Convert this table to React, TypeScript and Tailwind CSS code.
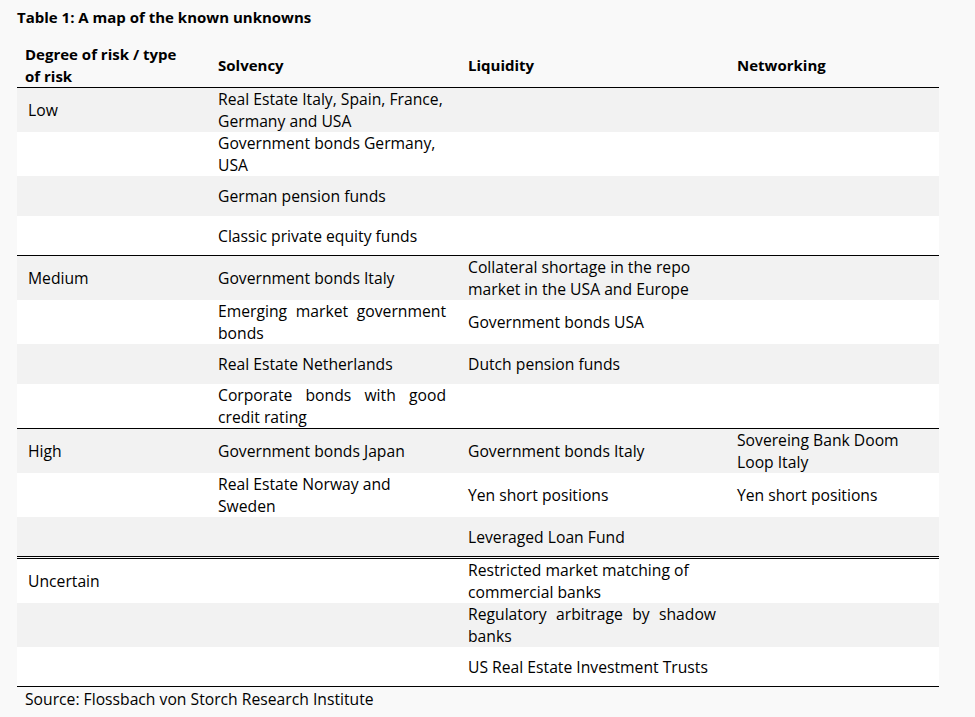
import React from "react";

type Cell = React.ReactNode;
type Row = { h: number; bg: "g" | "w"; c: [Cell, Cell, Cell, Cell] };

const J = ({ a, b, w }: { a: string; b: string; w?: boolean }) => (
  <div className={w ? "w-[248px]" : "w-[228px]"}>
    <div className="text-justify [text-align-last:justify]">{a}</div>
    <div>{b}</div>
  </div>
);
const T = ({ a, b }: { a: string; b?: string }) => (
  <div>
    <div className="whitespace-nowrap">{a}</div>
    {b && <div className="whitespace-nowrap">{b}</div>}
  </div>
);

const groups: { rows: Row[]; border: string }[] = [
  {
    border: "border-b border-black",
    rows: [
      { h: 44, bg: "g", c: ["Low", <T a="Real Estate Italy, Spain, France," b="Germany and USA" />, "", ""] },
      { h: 44, bg: "w", c: ["", <T a="Government bonds Germany," b="USA" />, "", ""] },
      { h: 40, bg: "g", c: ["", "German pension funds", "", ""] },
      { h: 39, bg: "w", c: ["", "Classic private equity funds", "", ""] },
    ],
  },
  {
    border: "border-b border-black",
    rows: [
      { h: 44, bg: "g", c: ["Medium", "Government bonds Italy", <T a="Collateral shortage in the repo" b="market in the USA and Europe" />, ""] },
      { h: 44, bg: "w", c: ["", <J a="Emerging market government" b="bonds" />, "Government bonds USA", ""] },
      { h: 40, bg: "g", c: ["", "Real Estate Netherlands", "Dutch pension funds", ""] },
      { h: 44, bg: "w", c: ["", <J a="Corporate bonds with good" b="credit rating" />, "", ""] },
    ],
  },
  {
    border: "border-b-[3px] border-double border-black",
    rows: [
      { h: 44, bg: "g", c: ["High", "Government bonds Japan", "Government bonds Italy", <T a="Sovereing Bank Doom" b="Loop Italy" />] },
      { h: 44, bg: "w", c: ["", <T a="Real Estate Norway and" b="Sweden" />, "Yen short positions", "Yen short positions"] },
      { h: 39, bg: "g", c: ["", "", "Leveraged Loan Fund", ""] },
    ],
  },
  {
    border: "border-b border-black",
    rows: [
      { h: 44, bg: "w", c: ["Uncertain", "", <T a="Restricted market matching of" b="commercial banks" />, ""] },
      { h: 44, bg: "g", c: ["", "", <J w a="Regulatory arbitrage by shadow" b="banks" />, ""] },
      { h: 39, bg: "w", c: ["", "", "US Real Estate Investment Trusts", ""] },
    ],
  },
];

const widths = ["w-[190px]", "w-[250px]", "w-[269px]", "w-[213px]"];

export default function App() {
  return (
    <div className="min-h-[717px] w-[975px] bg-[#f9f9f9] text-black font-['Open_Sans',sans-serif] text-[15.7px] leading-[22px]">
      <div className="pl-[17px] pt-[6px] h-[42px] font-bold text-[15px]">Table 1: A map of the known unknowns</div>
      <div className="ml-[17px] w-[922px]">
        <div className="flex h-[46px] items-center border-b border-black font-bold text-[15px]">
          <div className={`${widths[0]} pl-[8px]`}>
            <div>Degree of risk / type</div>
            <div>of risk</div>
          </div>
          <div className={`${widths[1]} pl-[11px]`}>Solvency</div>
          <div className={`${widths[2]} pl-[11px]`}>Liquidity</div>
          <div className={`${widths[3]} pl-[11px]`}>Networking</div>
        </div>
        {groups.map((g, gi) => (
          <div key={gi} className={g.border}>
            {g.rows.map((r, ri) => (
              <div
                key={ri}
                className={`flex items-center ${r.bg === "g" ? "bg-[#f2f2f2]" : "bg-white"}`}
                style={{ height: r.h }}
              >
                {r.c.map((c, ci) => (
                  <div key={ci} className={`${widths[ci]} pl-[11px] whitespace-nowrap`}>
                    {c}
                  </div>
                ))}
              </div>
            ))}
          </div>
        ))}
        <div className="pl-[8px] pt-[1px]">Source: Flossbach von Storch Research Institute</div>
      </div>
    </div>
  );
}
